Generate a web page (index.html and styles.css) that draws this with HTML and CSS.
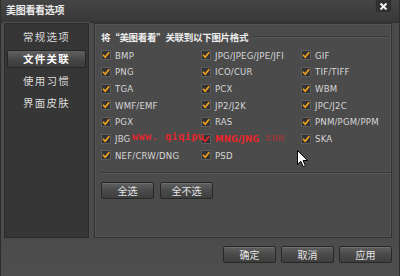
FILE: index.html
```html
<!DOCTYPE html>
<html>
<head>
<meta charset="utf-8">
<link rel="stylesheet" href="styles.css">
</head>
<body>
<div class="win">
  <div class="titlebar">
    <span class="title">美图看看选项</span>
    <span class="close"><svg width="9" height="9" viewBox="0 0 9 9"><path d="M1.5 1.5 L7.5 7.5 M7.5 1.5 L1.5 7.5" stroke="#f2f2f2" stroke-width="2"/></svg></span>
  </div>
  <div class="main">
    <div class="side">
      <div class="nav">常规选项</div>
      <div class="nav active">文件关联</div>
      <div class="nav">使用习惯</div>
      <div class="nav">界面皮肤</div>
    </div>
    <div class="panel">
      <div class="head"><span class="head-text">将“美图看看”关联到以下图片格式</span><i class="rule"></i></div>
      <div class="grid">
        <label class="item"><i class="cb"></i>BMP</label>
        <label class="item"><i class="cb"></i>JPG/JPEG/JPE/JFI</label>
        <label class="item"><i class="cb"></i>GIF</label>
        <label class="item"><i class="cb"></i>PNG</label>
        <label class="item"><i class="cb"></i>ICO/CUR</label>
        <label class="item"><i class="cb"></i>TIF/TIFF</label>
        <label class="item"><i class="cb"></i>TGA</label>
        <label class="item"><i class="cb"></i>PCX</label>
        <label class="item"><i class="cb"></i>WBM</label>
        <label class="item"><i class="cb"></i>WMF/EMF</label>
        <label class="item"><i class="cb"></i>JP2/J2K</label>
        <label class="item"><i class="cb"></i>JPC/J2C</label>
        <label class="item"><i class="cb"></i>PGX</label>
        <label class="item"><i class="cb"></i>RAS</label>
        <label class="item"><i class="cb"></i>PNM/PGM/PPM</label>
        <label class="item"><i class="cb"></i>JBG</label>
        <label class="item red"><i class="cb"></i>MNG/JNG<span class="wm-tail">com</span></label>
        <label class="item"><i class="cb"></i>SKA</label>
        <label class="item"><i class="cb"></i>NEF/CRW/DNG</label>
        <label class="item"><i class="cb"></i>PSD</label>
      </div>
      <div class="sep"></div>
      <div class="btns">
        <button class="btn">全选</button>
        <button class="btn">全不选</button>
      </div>
    </div>
  </div>
  <div class="footer">
    <button class="btn">确定</button>
    <button class="btn">取消</button>
    <button class="btn">应用</button>
  </div>
  <span class="watermark">www. qiqipu</span>
  <svg class="cursor" width="12" height="18" viewBox="0 0 12 18"><path d="M0.5 0.5 L0.5 14.5 L3.8 11.3 L6.2 16.8 L8.4 15.8 L6.1 10.5 L10.6 10.5 Z" fill="#fff" stroke="#000" stroke-width="1"/></svg>
</div>
</body>
</html>
```

FILE: styles.css
```css
* { box-sizing: border-box; }
html, body { margin: 0; padding: 0; }
body {
  width: 400px;
  height: 276px;
  overflow: hidden;
  background: #474747;
  font-family: "Noto Sans CJK SC", "DejaVu Sans", sans-serif;
}
.win {
  position: relative;
  width: 400px;
  height: 276px;
  display: flex;
  flex-direction: column;
  background: #4a4a4a;
  border-left: 1px solid #2e2e2e;
  border-right: 1px solid #2e2e2e;
}
.titlebar {
  height: 23px;
  flex: none;
  display: flex;
  align-items: flex-start;
  justify-content: space-between;
  background: linear-gradient(#454545, #383838);
  border-bottom: 1px solid #303030;
  padding-left: 5px;
  padding-right: 7px;
}
.title {
  color: #ececec;
  font-size: 10px;
  font-weight: bold;
  line-height: 20px;
  letter-spacing: -0.3px;
}
.close {
  width: 17px;
  height: 13px;
  background: #2f2f2f;
  border: 1px solid #3e3e3e;
  border-top: none;
  display: flex;
  align-items: center;
  justify-content: center;
}
.close svg { display: block; }
.main {
  height: 215px;
  flex: none;
  display: flex;
  gap: 5px;
  padding: 0 7px 0 3px;
}
.side {
  width: 86px;
  background: #363636;
  border: 1px solid #2a2a2a;
  box-shadow: 0 0 0 1px #505050;
  padding: 4px 2px 0 2px;
  display: flex;
  flex-direction: column;
  gap: 4px;
}
.nav {
  height: 18px;
  color: #dcdcdc;
  font-size: 10.5px;
  line-height: 18px;
  text-align: center;
  letter-spacing: 1.3px;
}
.nav.active {
  background: linear-gradient(#616161, #474747 55%, #3c3c3c);
  border: 1px solid #262626;
  border-radius: 2px;
  color: #fff;
  font-weight: bold;
  line-height: 16px;
}
.panel {
  flex: 1;
  background: #4b4b4b;
  border: 1px solid #333;
  box-shadow: inset 0 0 0 1px #555;
  padding: 6px 0 0 6px;
  display: flex;
  flex-direction: column;
}
.head {
  height: 14px;
  display: flex;
  align-items: center;
  gap: 4px;
  padding-right: 2px;
}
.head-text {
  color: #ececec;
  font-size: 9.5px;
  font-weight: bold;
  white-space: nowrap;
  letter-spacing: -0.3px;
}
.rule {
  flex: 1;
  height: 2px;
  border-top: 1px solid #3a3a3a;
  border-bottom: 1px solid #585858;
}
.grid {
  margin-top: 3px;
  display: grid;
  grid-template-columns: 100px 100px 90px;
  grid-auto-rows: 16.67px;
}
.item {
  display: flex;
  align-items: center;
  gap: 4px;
  color: #d6d6d6;
  font-family: "DejaVu Sans Condensed", "DejaVu Sans", sans-serif;
  font-size: 9.5px;
  letter-spacing: 0.2px;
  white-space: nowrap;
}
.cb {
  width: 10px;
  height: 10px;
  flex: none;
  background-color: #333;
  border: 1px solid #5c5c5c;
  background-image: url("data:image/svg+xml,%3Csvg xmlns='http://www.w3.org/2000/svg' viewBox='0 0 8 8'%3E%3Cpath d='M1 3.8 L3.2 6.2 L7.2 1.2' fill='none' stroke='%23f0a21e' stroke-width='1.7'/%3E%3C/svg%3E");
  background-size: 8px 8px;
  background-position: center;
  background-repeat: no-repeat;
}
.item.red { color: #e8252a; font-weight: bold; }
.item.red .cb {
  background-image: url("data:image/svg+xml,%3Csvg xmlns='http://www.w3.org/2000/svg' viewBox='0 0 8 8'%3E%3Cpath d='M1 3.8 L3.2 6.2 L7.2 1.2' fill='none' stroke='%23e8252a' stroke-width='1.7'/%3E%3C/svg%3E");
}
.wm-tail {
  margin-left: 2px;
  color: rgba(220, 40, 45, 0.55);
  font-family: "Liberation Mono", monospace;
  font-size: 10px;
}
.sep {
  margin-top: 8px;
  height: 2px;
  border-top: 1px solid #3a3a3a;
  border-bottom: 1px solid #585858;
  margin-left: -1px;
}
.btns {
  margin-top: 8px;
  display: flex;
  gap: 6px;
}
.btn {
  height: 17px;
  width: 53px;
  padding: 0;
  margin: 0;
  background: linear-gradient(#606060, #4a4a4a 50%, #3e3e3e);
  border: 1px solid #282828;
  border-radius: 2px;
  box-shadow: inset 0 1px 0 #6e6e6e;
  color: #e4e4e4;
  font-family: "Noto Sans CJK SC", sans-serif;
  font-size: 10px;
  line-height: 15px;
}
.footer {
  flex: 1;
  display: flex;
  justify-content: flex-end;
  gap: 5px;
  padding: 8px 7px 0 0;
  background: linear-gradient(#4b4b4b, #4e4e4e);
}
.watermark {
  position: absolute;
  left: 131px;
  top: 131px;
  color: #e8252a;
  font-family: "Liberation Mono", monospace;
  font-size: 10px;
  font-weight: bold;
  letter-spacing: 0.6px;
  white-space: pre;
  line-height: 14px;
}
.cursor {
  position: absolute;
  left: 296px;
  top: 150px;
}
```
